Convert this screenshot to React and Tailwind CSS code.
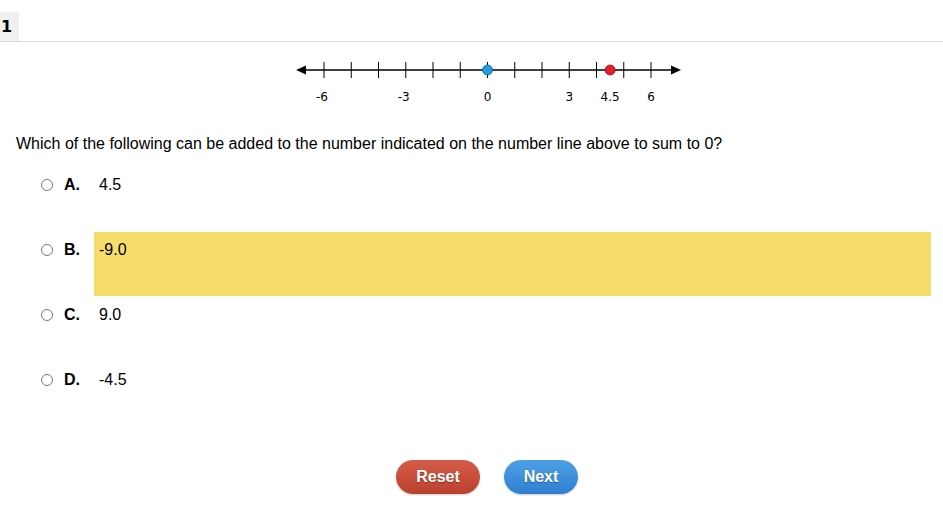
const TICKS = [-6, -5, -4, -3, -2, -1, 0, 1, 2, 3, 4, 5, 6];
const LABELS = [-6, -3, 0, 3, 4.5, 6];

const OPTIONS = [
  { letter: 'A', value: '4.5' },
  { letter: 'B', value: '-9.0', selected: true },
  { letter: 'C', value: '9.0' },
  { letter: 'D', value: '-4.5' },
];

const x = (v) => 34 + (v + 6) * 27.25;

function NumberLine() {
  return (
    <svg width="400" height="48" viewBox="0 0 400 48" className="block">
      <line x1="10" y1="10" x2="386" y2="10" stroke="#000" strokeWidth="1.3" />
      <polygon points="6,10 16,5.5 16,14.5" fill="#000" />
      <polygon points="391,10 381,5.5 381,14.5" fill="#000" />
      {TICKS.map((t) => (
        <line key={t} x1={x(t)} y1="2" x2={x(t)} y2="18" stroke="#000" strokeWidth="1" />
      ))}
      {LABELS.map((l) => (
        <text
          key={l}
          x={x(l) - (l < 0 ? 2 : 0)}
          y="41"
          textAnchor="middle"
          fontSize="12"
          fontFamily="'DejaVu Sans', Verdana, sans-serif"
          fill="#000"
        >
          {l}
        </text>
      ))}
      <circle cx={x(0)} cy="10" r="5" fill="#1e9ee0" stroke="#0b5e8a" strokeWidth="0.8" />
      <circle cx={x(4.5)} cy="10" r="5" fill="#e21f2a" stroke="#8a1016" strokeWidth="0.8" />
    </svg>
  );
}

export default function App() {
  return (
    <div className="min-h-[510px] bg-white font-['Liberation_Sans',Arial,sans-serif] text-black">
      <div className="pt-3">
        <div className="border-b border-[#dcdcdc]">
          <div className="flex h-[29px] w-[19px] items-center bg-[#f0f0f0] pl-[1px] font-['DejaVu_Sans',sans-serif] text-[16px] font-bold">
            1
          </div>
        </div>
      </div>

      <div className="ml-[290px] mt-[18px]">
        <NumberLine />
      </div>

      <p className="ml-4 mt-[25px] text-[16px] leading-[22px]">
        Which of the following can be added to the number indicated on the number line above to sum to 0?
      </p>

      <div className="mt-[12px]">
        {OPTIONS.map((o) => (
          <div key={o.letter} className="flex h-[65px] items-start">
            <span className="ml-[41px] mt-[12px] h-[12px] w-[12px] rounded-full border border-[#777] bg-white" />
            <span className="ml-[11px] mt-[8px] w-[30px] text-[16px] font-bold leading-[20px]">{o.letter}.</span>
            <div
              className={`mr-3 h-[64px] flex-1 pl-[5px] pt-[8px] text-[16px] leading-[20px] ${
                o.selected ? 'bg-[#f6dc6b]' : ''
              }`}
            >
              {o.value}
            </div>
          </div>
        ))}
      </div>

      <div className="ml-[396px] mt-[33px] flex gap-6">
        <button className="h-[34px] w-[84px] rounded-full bg-gradient-to-b from-[#d55c48] to-[#b9412e] text-[16px] font-bold text-white [text-shadow:0_1px_1px_rgba(0,0,0,0.35)] shadow-[0_1px_2px_rgba(0,0,0,0.2)]">
          Reset
        </button>
        <button className="h-[34px] w-[74px] rounded-full bg-gradient-to-b from-[#4da0e4] to-[#2e7fd1] text-[16px] font-bold text-white [text-shadow:0_1px_1px_rgba(0,0,0,0.35)] shadow-[0_1px_2px_rgba(0,0,0,0.2)]">
          Next
        </button>
      </div>
    </div>
  );
}
